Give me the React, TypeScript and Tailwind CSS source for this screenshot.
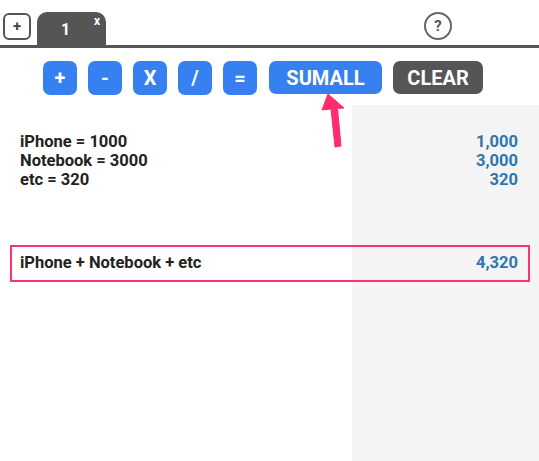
import React from "react";

const ops = ["+", "-", "X", "/", "="];

const rows = [
  { label: "iPhone = 1000", value: "1,000" },
  { label: "Notebook = 3000", value: "3,000" },
  { label: "etc = 320", value: "320" },
];

export default function App() {
  return (
    <div className="flex h-[461px] w-[539px] flex-col overflow-hidden bg-white font-['Roboto',sans-serif]">
      {/* tab strip */}
      <div className="flex h-[48px] items-end border-b-[3px] border-[#555] pl-[3px]">
        <div className="mb-[5px] flex h-[27px] w-[28px] items-center justify-center rounded-[6px] border-2 border-[#555] text-[15px] font-bold leading-none text-[#444]">
          +
        </div>
        <div className="ml-[6px] relative flex h-[33px] w-[69px] items-center rounded-t-[10px] bg-[#555] pl-[24px] pt-[2px] text-[16px] font-bold text-white">
          1
          <span className="absolute right-[6px] top-[3px] text-[12px] leading-none">x</span>
        </div>
        <div className="ml-[318px] mb-[5px] flex h-[28px] w-[28px] items-center justify-center rounded-full border-2 border-[#666] text-[15px] font-bold leading-none text-[#555]">
          ?
        </div>
      </div>

      {/* operator buttons */}
      <div className="relative flex h-[57px] items-start gap-[11px] pl-[43px] pt-[13px]">
        {ops.map((op) => (
          <div
            key={op}
            className="flex h-[34px] w-[34px] items-center justify-center rounded-[7px] bg-[#3780f2] text-[20px] font-bold text-white"
          >
            {op}
          </div>
        ))}
        <div className="ml-[1px] flex h-[33px] w-[113px] items-center justify-center rounded-[7px] bg-[#3780f2] text-[20px] font-bold text-white">
          SUMALL
        </div>
        <div className="flex h-[33px] w-[90px] items-center justify-center rounded-[7px] bg-[#555] text-[20px] font-bold text-white">
          CLEAR
        </div>
        {/* pointer arrow */}
        <svg className="absolute left-[318px] top-[46px] z-10" width="30" height="58" viewBox="0 0 30 58">
          <path d="M10 0 L26 14 L19.5 14.5 L23 52 L17 53 L13 15 L4 16 Z" fill="#ff2d6e" stroke="#ff2d6e" strokeWidth="1" strokeLinejoin="round" />
        </svg>
      </div>

      {/* sheet */}
      <div className="flex-1 bg-[linear-gradient(to_right,#ffffff_352px,#f4f4f4_352px)] pt-[27px]">
        <div className="flex flex-col text-[16.5px] font-bold leading-[19px]">
          {rows.map((r) => (
            <div key={r.label} className="flex justify-between pl-[20px] pr-[21px]">
              <span className="text-[#222]">{r.label}</span>
              <span className="text-[#2e76ae]">{r.value}</span>
            </div>
          ))}
        </div>
        <div className="ml-[10px] mr-[9px] mt-[56px] flex h-[37px] items-center justify-between border-2 border-[#ff3370] pl-[8px] pr-[10px] text-[16.5px] font-bold">
          <span className="text-[#222]">iPhone + Notebook + etc</span>
          <span className="text-[#2e76ae]">4,320</span>
        </div>
      </div>
    </div>
  );
}
